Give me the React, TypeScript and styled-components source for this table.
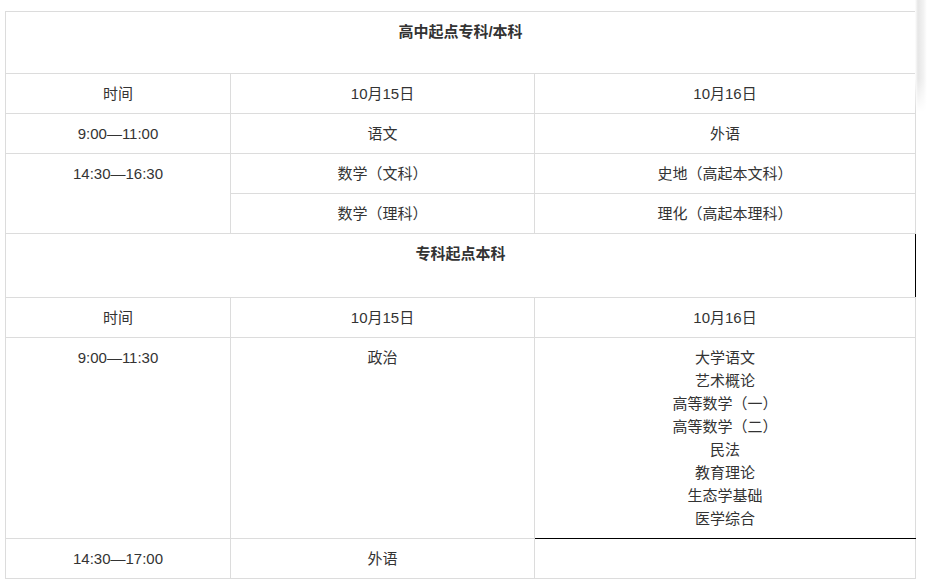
import React from "react";
import styled, {createGlobalStyle} from "styled-components";

const GlobalStyle = createGlobalStyle`
  html, body {
    margin: 0;
    padding: 0;
    background: #fff;
  }
`;

type Row = {time: string; day15: string; day16: string[]; timeSpan?: number};

const sections = [
  {
    title: "高中起点专科/本科",
    titleHeight: 45,
    rows: [
      {time: "9:00—11:00", day15: "语文", day16: ["外语"]},
      {time: "14:30—16:30", day15: "数学（文科）", day16: ["史地（高起本文科）"], timeSpan: 2},
      {time: "", day15: "数学（理科）", day16: ["理化（高起本理科）"]},
    ] as Row[],
  },
  {
    title: "专科起点本科",
    titleHeight: 47,
    rows: [
      {
        time: "9:00—11:30",
        day15: "政治",
        day16: ["大学语文", "艺术概论", "高等数学（一）", "高等数学（二）", "民法", "教育理论", "生态学基础", "医学综合"],
      },
      {time: "14:30—17:00", day15: "外语", day16: []},
    ] as Row[],
  },
];

export default function App() {
  return (
    <Page>
      <GlobalStyle />
      <Schedule>
        <colgroup>
          <col style={{width: 225}} />
          <col style={{width: 304}} />
          <col style={{width: 381}} />
        </colgroup>
        <tbody>
          {sections.map((section, s) => (
            <React.Fragment key={section.title}>
              <tr>
                <Cell colSpan={3} $bold $height={section.titleHeight} $darkRight={s === 1}>
                  {section.title}
                </Cell>
              </tr>
              <tr>
                <Cell>时间</Cell>
                <Cell>10月15日</Cell>
                <Cell>10月16日</Cell>
              </tr>
              {section.rows.map((row, i) => {
                const skipTime = i > 0 && section.rows[i - 1].timeSpan === 2;
                const lastList = s === 1 && i === 0;
                return (
                  <tr key={i}>
                    {!skipTime && <Cell rowSpan={row.timeSpan}>{row.time}</Cell>}
                    <Cell>{row.day15}</Cell>
                    <Cell $darkBottom={lastList}>
                      {row.day16.map((line) => (
                        <Line key={line}>{line}</Line>
                      ))}
                    </Cell>
                  </tr>
                );
              })}
            </React.Fragment>
          ))}
        </tbody>
      </Schedule>
      <ScrollShade />
    </Page>
  );
}

const Page = styled.div`
  position: relative;
  width: 927px;
  height: 587px;
  padding: 11px 0 0 5px;
  box-sizing: border-box;
  overflow: hidden;
  font-family: "Liberation Sans", "Noto Sans CJK SC", sans-serif;
  font-size: 15px;
  color: #333;
`;

const Schedule = styled.table`
  width: 911px;
  table-layout: fixed;
  border-collapse: collapse;
  border: 1px solid #dcdcdc;
`;

const Cell = styled.td<{$bold?: boolean; $height?: number; $darkRight?: boolean; $darkBottom?: boolean}>`
  border: 1px solid #dcdcdc;
  padding: 8px;
  line-height: 23px;
  text-align: center;
  vertical-align: top;
  font-weight: ${({$bold}) => ($bold ? 700 : 400)};
  height: ${({$height}) => ($height ? `${$height}px` : "auto")};
  box-sizing: content-box;
  ${({$darkRight}) => $darkRight && "border-right-color: #000;"}
  ${({$darkBottom}) => $darkBottom && "border-bottom-color: #000;"}
`;

const Line = styled.div`
  white-space: nowrap;
`;

const ScrollShade = styled.div`
  position: absolute;
  top: 0;
  right: 0;
  width: 12px;
  height: 112px;
  background: linear-gradient(to right, #fff 0%, #e6e6e6 25%, #f2f2f2 70%, #fff 100%);
  -webkit-mask-image: linear-gradient(to bottom, #000 70%, transparent 100%);
  mask-image: linear-gradient(to bottom, #000 70%, transparent 100%);
`;
